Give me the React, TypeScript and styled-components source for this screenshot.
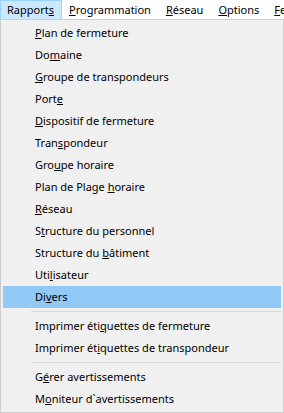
import React from "react";
import styled, { createGlobalStyle } from "styled-components";

const Global = createGlobalStyle`
  html, body { margin: 0; padding: 0; background: #ffffff; }
  body { font-family: "Noto Sans", "Open Sans", sans-serif; font-size: 11px; color: #000; }
`;

const Page = styled.div`
  width: 284px;
  height: 413px;
  overflow: hidden;
  display: flex;
  flex-direction: column;
`;

const MenuBar = styled.div`
  display: flex;
  height: 19px;
  background: #ffffff;
  white-space: nowrap;
`;

const BarItem = styled.div<{ $active?: boolean }>`
  padding: 0 7px 0 6px;
  height: 18px;
  line-height: 17px;
  border: 1px solid ${(p) => (p.$active ? "#99d1ff" : "transparent")};
  background: ${(p) => (p.$active ? "#cce8ff" : "transparent")};
`;

const Dropdown = styled.div`
  width: 284px;
  box-sizing: border-box;
  border: 1px solid #cccccc;
  background: #f0f0f0;
  padding: 2px;
  display: flex;
  flex-direction: column;
`;

const Item = styled.div<{ $active?: boolean }>`
  height: 22px;
  line-height: 22px;
  padding-left: 32px;
  background: ${(p) => (p.$active ? "#91c9f7" : "transparent")};
  white-space: nowrap;
`;

const Separator = styled.div`
  height: 7px;
  display: flex;
  align-items: center;
  padding-left: 28px;
  &::after {
    content: "";
    flex: 1;
    height: 1px;
    background: #d7d7d7;
  }
`;

type Entry = { pre: string; key: string; post: string; active?: boolean } | "sep";

const bar = [
  { pre: "Rapport", key: "s", post: "", active: true },
  { pre: "", key: "P", post: "rogrammation" },
  { pre: "", key: "R", post: "éseau" },
  { pre: "", key: "O", post: "ptions" },
  { pre: "", key: "F", post: "enêtre" },
];

const entries: Entry[] = [
  { pre: "", key: "P", post: "lan de fermeture" },
  { pre: "Do", key: "m", post: "aine" },
  { pre: "", key: "G", post: "roupe de transpondeurs" },
  { pre: "Port", key: "e", post: "" },
  { pre: "", key: "D", post: "ispositif de fermeture" },
  { pre: "Tran", key: "s", post: "pondeur" },
  { pre: "Gro", key: "u", post: "pe horaire" },
  { pre: "Plan de Plage ", key: "h", post: "oraire" },
  { pre: "", key: "R", post: "éseau" },
  { pre: "S", key: "t", post: "ructure du personnel" },
  { pre: "Structure du ", key: "b", post: "âtiment" },
  { pre: "Uti", key: "l", post: "isateur" },
  { pre: "Di", key: "v", post: "ers", active: true },
  "sep",
  { pre: "Imprimer éti", key: "q", post: "uettes de fermeture" },
  { pre: "Imprimer ét", key: "i", post: "quettes de transpondeur" },
  "sep",
  { pre: "G", key: "é", post: "rer avertissements" },
  { pre: "M", key: "o", post: "niteur d`avertissements" },
];

export default function App() {
  return (
    <Page>
      <Global />
      <MenuBar>
        {bar.map((b, i) => (
          <BarItem key={i} $active={b.active}>
            {b.pre}
            <u>{b.key}</u>
            {b.post}
          </BarItem>
        ))}
      </MenuBar>
      <Dropdown>
        {entries.map((e, i) =>
          e === "sep" ? (
            <Separator key={i} />
          ) : (
            <Item key={i} $active={e.active}>
              {e.pre}
              <u>{e.key}</u>
              {e.post}
            </Item>
          )
        )}
      </Dropdown>
    </Page>
  );
}
